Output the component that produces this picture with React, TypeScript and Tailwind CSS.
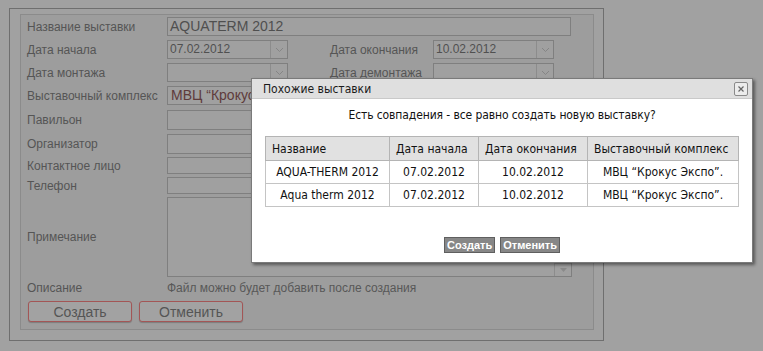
import React from 'react';

const labelCls = "w-[140px] shrink-0 text-[12px] text-[#555555]";
const inputCls = "border border-[#7f7f7f] bg-[#a0a0a0]";

const Select: React.FC<{ value?: string }> = ({ value }) => (
    <div className={`${inputCls} w-[121px] h-full flex`}>
        <div className="flex-1 pl-[2px] text-[12px] leading-[17px] text-[#505050]">{value}</div>
        <div className="w-[17px] border-l border-[#8c8c8c] flex items-center justify-center">
            <svg width="9" height="6" viewBox="0 0 9 6">
                <path d="M1 1 L4.5 4.5 L8 1" fill="none" stroke="#858585" strokeWidth="1" />
            </svg>
        </div>
    </div>
);

const rows = [
    { name: 'AQUA-THERM 2012', start: '07.02.2012', end: '10.02.2012', place: 'МВЦ “Крокус Экспо”.' },
    { name: 'Aqua therm 2012', start: '07.02.2012', end: '10.02.2012', place: 'МВЦ “Крокус Экспо”.' },
];

const App: React.FC = () => {
    const dlgFont = { fontFamily: '"DejaVu Sans Condensed", "DejaVu Sans", Tahoma, sans-serif' };
    return (
        <div className="relative w-[763px] h-[351px] bg-[#a1a1a1] overflow-hidden pt-[8px] pl-[9px]" style={{ fontFamily: '"Liberation Sans", Arial, sans-serif' }}>
            {/* форма выставки */}
            <div className="w-[595px] h-[333px] border border-[#6f6f6f] pl-[10px] pt-[5px]">
                <div className="w-[574px] h-[316px] border border-[#8b8b8b] bg-[#9d9d9d] pl-[6px] flex flex-col">
                    <div className="flex items-center h-[19px] mt-[2px]">
                        <div className={labelCls}>Название выставки</div>
                        <div className={`${inputCls} w-[404px] h-full pl-[2px] text-[14px] leading-[17px] text-[#4f4f4f]`}>AQUATERM 2012</div>
                    </div>
                    <div className="flex items-center h-[19px] mt-[4px]">
                        <div className={labelCls}>Дата начала</div>
                        <Select value="07.02.2012" />
                        <div className="ml-[42px] w-[103px] text-[12px] text-[#555555]">Дата окончания</div>
                        <Select value="10.02.2012" />
                    </div>
                    <div className="flex items-center h-[19px] mt-[4px]">
                        <div className={labelCls}>Дата монтажа</div>
                        <Select />
                        <div className="ml-[42px] w-[103px] text-[12px] text-[#555555]">Дата демонтажа</div>
                        <Select />
                    </div>
                    <div className="flex items-center h-[19px] mt-[4px]">
                        <div className={labelCls}>Выставочный комплекс</div>
                        <div className={`${inputCls} w-[404px] h-full pl-[3px] text-[14px] leading-[17px] text-[#5e3b3b]`}>МВЦ “Крокус Экспо”</div>
                    </div>
                    <div className="flex items-center h-[20px] mt-[5px]">
                        <div className={labelCls}>Павильон</div>
                        <div className={`${inputCls} w-[404px] h-full`} />
                    </div>
                    <div className="flex items-center h-[20px] mt-[4px]">
                        <div className={labelCls}>Организатор</div>
                        <div className={`${inputCls} w-[404px] h-full`} />
                    </div>
                    <div className="flex items-center h-[17px] mt-[3px]">
                        <div className={labelCls}>Контактное лицо</div>
                        <div className={`${inputCls} w-[404px] h-full`} />
                    </div>
                    <div className="flex items-center h-[17px] mt-[3px]">
                        <div className={labelCls}>Телефон</div>
                        <div className={`${inputCls} w-[404px] h-full`} />
                    </div>
                    <div className="flex items-center h-[80px] mt-[3px]">
                        <div className={labelCls}>Примечание</div>
                        <div className={`${inputCls} w-[405px] h-full flex flex-col justify-end items-end`}>
                            <div className="w-[17px] h-[13px] border-l border-t border-[#8c8c8c] flex items-center justify-center">
                                <svg width="7" height="4" viewBox="0 0 7 4">
                                    <path d="M0 0 L7 0 L3.5 4 Z" fill="#8a8a8a" />
                                </svg>
                            </div>
                        </div>
                    </div>
                    <div className="flex items-center h-[16px] mt-[3px]">
                        <div className={labelCls}>Описание</div>
                        <div className="text-[12px] text-[#585858]">Файл можно будет добавить после создания</div>
                    </div>
                    <div className="flex items-center h-[21px] mt-[5px] gap-[7px] pl-[1px]">
                        <button className="w-[104px] h-full border border-[#a35656] rounded-[3px] bg-[#a2a2a2] text-[14px] text-[#555555] shadow-[0_1px_1px_rgba(0,0,0,0.2)]">Создать</button>
                        <button className="w-[104px] h-full border border-[#a35656] rounded-[3px] bg-[#a2a2a2] text-[14px] text-[#555555] shadow-[0_1px_1px_rgba(0,0,0,0.2)]">Отменить</button>
                    </div>
                </div>
            </div>

            {/* диалог */}
            <div className="absolute left-[251px] top-[78px] w-[502px] h-[185px] bg-white border border-[#7a7a7a] shadow-[2px_2px_3px_rgba(0,0,0,0.45)] flex flex-col" style={dlgFont}>
                <div className="h-[20px] bg-[#dfdfdf] border-b border-[#c9c9c9] flex items-center justify-between pl-[11px] pr-[4px]">
                    <span className="text-[12px] text-[#1a1a1a]">Похожие выставки</span>
                    <div className="w-[14px] h-[14px] border border-[#8a8a8a] rounded-[2px] bg-[#ececec] flex items-center justify-center">
                        <svg width="8" height="8" viewBox="0 0 8 8">
                            <path d="M1.5 1.5 L6.5 6.5 M6.5 1.5 L1.5 6.5" stroke="#666" strokeWidth="1.2" />
                        </svg>
                    </div>
                </div>
                <div className="text-center text-[12px] text-[#111] mt-[9px] leading-[15px] tracking-[-0.1px]">Есть совпадения - все равно создать новую выставку?</div>
                <table className="mt-[13px] mx-[13px] w-[474px] border-collapse text-[12px] text-[#111]">
                    <thead>
                        <tr className="h-[24px] bg-[#e1e1e1]">
                            <th className="w-[124px] border border-[#b4b4b4] text-left font-normal pl-[6px]">Название</th>
                            <th className="w-[89px] border border-[#b4b4b4] text-left font-normal pl-[6px]">Дата начала</th>
                            <th className="w-[109px] border border-[#b4b4b4] text-left font-normal pl-[6px]">Дата окончания</th>
                            <th className="border border-[#b4b4b4] text-left font-normal pl-[6px]">Выставочный комплекс</th>
                        </tr>
                    </thead>
                    <tbody>
                        {rows.map((r, i) => (
                            <tr key={i} className="h-[23px]">
                                <td className="border border-[#c4c4c4] text-center">{r.name}</td>
                                <td className="border border-[#c4c4c4] text-center">{r.start}</td>
                                <td className="border border-[#c4c4c4] text-center">{r.end}</td>
                                <td className="border border-[#c4c4c4] text-center">{r.place}</td>
                            </tr>
                        ))}
                    </tbody>
                </table>
                <div className="flex justify-center gap-[5px] mt-[30px]" style={{ fontFamily: '"Liberation Sans", Arial, sans-serif' }}>
                    <button className="h-[16px] px-[2px] bg-[#878787] border border-[#5f5f5f] text-white text-[11px] font-bold leading-[14px]">Создать</button>
                    <button className="h-[16px] px-[2px] bg-[#878787] border border-[#5f5f5f] text-white text-[11px] font-bold leading-[14px]">Отменить</button>
                </div>
            </div>
        </div>
    );
};

export default App;
